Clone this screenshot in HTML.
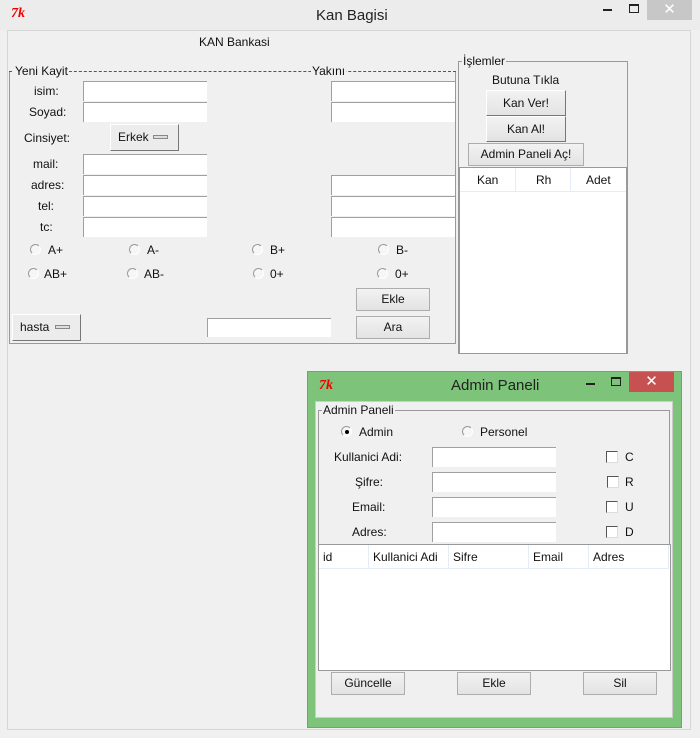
<!DOCTYPE html><html><head><style>
*{margin:0;padding:0;box-sizing:border-box}
body{width:700px;height:738px;background:#f0f0f0;font:12px "Liberation Sans",sans-serif;color:#111;position:relative;overflow:hidden}
.a{position:absolute;white-space:nowrap}
.e{position:absolute;background:#fff;border-top:1px solid #a0a0a0;border-left:1px solid #a0a0a0;height:20px;width:124px}
.b{position:absolute;background:linear-gradient(#f2f2f2,#e3e3e3);border:1px solid #adadad;text-align:center;line-height:21px}
.mb{position:absolute;background:#ececec;border:1px solid;border-color:#fff #777 #777 #fff;line-height:24px;padding-left:7px}
.mb i{position:absolute;right:10px;top:10px;width:15px;height:4px;border:1px solid #888;background:#ddd}
.r{position:absolute;width:11px;height:11px;border-radius:50%;border:1px solid #999;background:#f6f6f6;border-right-color:#fff;border-bottom-color:#fff}
.c{position:absolute;width:12px;height:12px;border:1px solid #555;background:#fff;border-right-color:#ddd;border-bottom-color:#ddd}
.tk{position:absolute;color:#e00;font:italic bold 14px "Liberation Serif",serif}
</style></head><body>
<div class="a" style="left:0;top:0;width:700px;height:30px;background:#ececec"></div>
<div class="tk" style="left:11px;top:6px">7k</div>
<div class="a" style="left:316px;top:7px;font-size:15px;color:#222">Kan Bagisi</div>
<div class="a" style="left:603px;top:9px;width:9px;height:2px;background:#222"></div>
<div class="a" style="left:629px;top:4px;width:10px;height:9px;border:1px solid #222;border-top-width:2px"></div>
<div class="a" style="left:647px;top:0;width:45px;height:20px;background:#c7c7c7;color:#fff;text-align:center;font-size:15px;line-height:20px">✕</div>
<div class="a" style="left:7px;top:30px;width:684px;height:700px;border:1px solid #d6d6d6"></div>
<div class="a" style="left:199px;top:35px">KAN Bankasi</div>
<!-- Yeni kayit frame -->
<div class="a" style="left:9px;top:71px;width:447px;height:273px;border-left:1px solid #999;border-bottom:1px solid #999;border-right:1px solid #999"></div>
<div class="a" style="left:9px;top:71px;width:447px;border-top:1px dashed #555"></div>
<div class="a" style="left:14px;top:64px;background:#f0f0f0;padding:0 1px">Yeni Kayit</div>
<div class="a" style="left:311px;top:64px;background:#f0f0f0;padding:0 1px">Yakını</div>
<div class="a" style="left:34px;top:84px">isim:</div><div class="e" style="left:83px;top:81px"></div><div class="e" style="left:331px;top:81px"></div>
<div class="a" style="left:29px;top:105px">Soyad:</div><div class="e" style="left:83px;top:102px"></div><div class="e" style="left:331px;top:102px"></div>
<div class="a" style="left:24px;top:131px">Cinsiyet:</div>
<div class="mb" style="left:110px;top:124px;width:69px;height:27px">Erkek<i></i></div>
<div class="a" style="left:33px;top:157px">mail:</div><div class="e" style="left:83px;top:154px"></div>
<div class="a" style="left:31px;top:178px">adres:</div><div class="e" style="left:83px;top:175px"></div><div class="e" style="left:331px;top:175px"></div>
<div class="a" style="left:38px;top:199px">tel:</div><div class="e" style="left:83px;top:196px"></div><div class="e" style="left:331px;top:196px"></div>
<div class="a" style="left:40px;top:220px">tc:</div><div class="e" style="left:83px;top:217px"></div><div class="e" style="left:331px;top:217px"></div>
<div class="r" style="left:30px;top:244px"></div><div class="a" style="left:48px;top:243px">A+</div>
<div class="r" style="left:129px;top:244px"></div><div class="a" style="left:147px;top:243px">A-</div>
<div class="r" style="left:252px;top:244px"></div><div class="a" style="left:270px;top:243px">B+</div>
<div class="r" style="left:378px;top:244px"></div><div class="a" style="left:396px;top:243px">B-</div>
<div class="r" style="left:28px;top:268px"></div><div class="a" style="left:44px;top:267px">AB+</div>
<div class="r" style="left:127px;top:268px"></div><div class="a" style="left:144px;top:267px">AB-</div>
<div class="r" style="left:253px;top:268px"></div><div class="a" style="left:270px;top:267px">0+</div>
<div class="r" style="left:377px;top:268px"></div><div class="a" style="left:395px;top:267px">0+</div>
<div class="b" style="left:356px;top:288px;width:74px;height:23px">Ekle</div>
<div class="b" style="left:356px;top:316px;width:74px;height:23px">Ara</div>
<div class="mb" style="left:12px;top:314px;width:69px;height:27px">hasta<i></i></div>
<div class="e" style="left:207px;top:318px;height:19px"></div>
<!-- Islemler -->
<div class="a" style="left:458px;top:61px;width:170px;height:293px;border:1px solid #999"></div>
<div class="a" style="left:462px;top:54px;background:#f0f0f0;padding:0 1px">İşlemler</div>
<div class="a" style="left:492px;top:73px">Butuna Tıkla</div>
<div class="b" style="left:486px;top:90px;width:80px;height:26px;line-height:24px;border-color:#fff #777 #777 #fff">Kan Ver!</div>
<div class="b" style="left:486px;top:116px;width:80px;height:26px;line-height:24px;border-color:#fff #777 #777 #fff">Kan Al!</div>
<div class="b" style="left:468px;top:143px;width:116px;height:23px">Admin Paneli Aç!</div>
<div class="a" style="left:459px;top:167px;width:168px;height:187px;background:#fff;border:1px solid #999"></div>
<div class="a" style="left:460px;top:168px;width:166px;height:24px;border-bottom:1px solid #e3ecf7"></div>
<div class="a" style="left:515px;top:168px;height:24px;border-left:1px solid #e3ecf7"></div>
<div class="a" style="left:570px;top:168px;height:24px;border-left:1px solid #e3ecf7"></div>
<div class="a" style="left:477px;top:173px">Kan</div><div class="a" style="left:536px;top:173px">Rh</div><div class="a" style="left:586px;top:173px">Adet</div>
<!-- Admin panel window -->
<div class="a" style="left:307px;top:371px;width:375px;height:357px;background:#7dc37a;border:1px solid #6aa967"></div>
<div class="tk" style="left:319px;top:378px">7k</div>
<div class="a" style="left:451px;top:377px;font-size:15px;color:#222">Admin Paneli</div>
<div class="a" style="left:586px;top:383px;width:9px;height:2px;background:#222"></div>
<div class="a" style="left:611px;top:377px;width:10px;height:9px;border:1px solid #222;border-top-width:2px"></div>
<div class="a" style="left:629px;top:372px;width:45px;height:20px;background:#c75050;color:#fff;text-align:center;font-size:15px;line-height:20px">✕</div>
<div class="a" style="left:315px;top:401px;width:358px;height:317px;background:#f0f0f0;border:1px solid #ccc"></div>
<div class="a" style="left:318px;top:410px;width:352px;height:260px;border:1px solid #999"></div>
<div class="a" style="left:322px;top:403px;background:#f0f0f0;padding:0 1px">Admin Paneli</div>
<div class="r" style="left:341px;top:426px"></div><div class="a" style="left:345px;top:430px;width:4px;height:4px;border-radius:50%;background:#000"></div>
<div class="a" style="left:359px;top:425px">Admin</div>
<div class="r" style="left:462px;top:426px"></div><div class="a" style="left:480px;top:425px">Personel</div>
<div class="a" style="left:334px;top:450px">Kullanici Adi:</div><div class="e" style="left:432px;top:447px"></div>
<div class="a" style="left:355px;top:475px">Şifre:</div><div class="e" style="left:432px;top:472px"></div>
<div class="a" style="left:352px;top:500px">Email:</div><div class="e" style="left:432px;top:497px"></div>
<div class="a" style="left:352px;top:525px">Adres:</div><div class="e" style="left:432px;top:522px"></div>
<div class="c" style="left:606px;top:451px"></div><div class="a" style="left:625px;top:450px">C</div>
<div class="c" style="left:607px;top:476px"></div><div class="a" style="left:625px;top:475px">R</div>
<div class="c" style="left:606px;top:501px"></div><div class="a" style="left:625px;top:500px">U</div>
<div class="c" style="left:606px;top:526px"></div><div class="a" style="left:625px;top:525px">D</div>
<div class="a" style="left:318px;top:544px;width:353px;height:127px;background:#fff;border:1px solid #999"></div>
<div class="a" style="left:319px;top:545px;width:350px;height:24px;border-bottom:1px solid #e3ecf7"></div>
<div class="a" style="left:368px;top:545px;height:24px;border-left:1px solid #e3ecf7"></div>
<div class="a" style="left:448px;top:545px;height:24px;border-left:1px solid #e3ecf7"></div>
<div class="a" style="left:528px;top:545px;height:24px;border-left:1px solid #e3ecf7"></div>
<div class="a" style="left:588px;top:545px;height:24px;border-left:1px solid #e3ecf7"></div>
<div class="a" style="left:668px;top:545px;height:24px;border-left:1px solid #e3ecf7"></div>
<div class="a" style="left:323px;top:550px">id</div><div class="a" style="left:373px;top:550px">Kullanici Adi</div><div class="a" style="left:453px;top:550px">Sifre</div><div class="a" style="left:533px;top:550px">Email</div><div class="a" style="left:593px;top:550px">Adres</div>
<div class="b" style="left:331px;top:672px;width:74px;height:23px">Güncelle</div>
<div class="b" style="left:457px;top:672px;width:74px;height:23px">Ekle</div>
<div class="b" style="left:583px;top:672px;width:74px;height:23px">Sil</div>
</body></html>
